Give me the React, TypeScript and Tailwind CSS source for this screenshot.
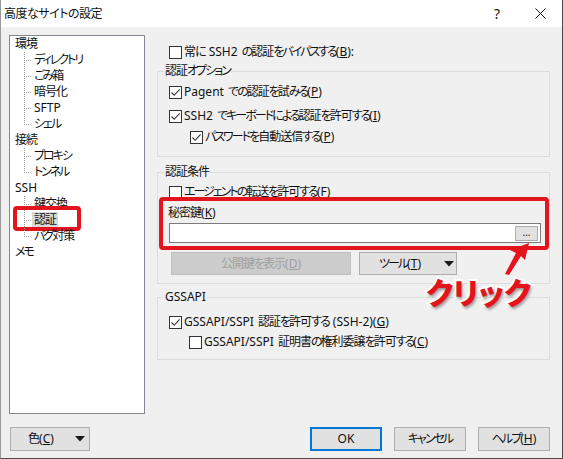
import React from 'react';

type Item = { label: string; child?: boolean; last?: boolean; selected?: boolean };

const tree: Item[] = [
  { label: '環境' },
  { label: 'ディレクトリ', child: true },
  { label: 'ごみ箱', child: true },
  { label: '暗号化', child: true },
  { label: 'SFTP', child: true },
  { label: 'シェル', child: true, last: true },
  { label: '接続' },
  { label: 'プロキシ', child: true },
  { label: 'トンネル', child: true, last: true },
  { label: 'SSH' },
  { label: '鍵交換', child: true },
  { label: '認証', child: true, selected: true },
  { label: 'バグ対策', child: true, last: true },
  { label: 'メモ' },
];

// narrower kana / kanji runs, closer to Meiryo UI widths
const T = ({ s }: { s: string }) => (
  <>
    {s.split(/([\u3040-\u30ff]+|[\u4e00-\u9fff]+)/).map((p, i) =>
      /[\u3040-\u30ff]/.test(p) ? (
        <span key={i} className="tracking-[-2px]">{p}</span>
      ) : /[\u4e00-\u9fff]/.test(p) ? (
        <span key={i} className="tracking-[-1px]">{p}</span>
      ) : (
        p
      )
    )}
  </>
);

// dotted tree connector
const Branch = ({ last }: { last?: boolean }) => (
  <svg width="17" height="16" className="shrink-0" shapeRendering="crispEdges">
    <line x1="9.5" y1="0" x2="9.5" y2={last ? 9 : 16} stroke="#9a9a9a" strokeDasharray="1 1" />
    <line x1="11" y1="8.5" x2="17" y2="8.5" stroke="#9a9a9a" strokeDasharray="1 1" />
  </svg>
);

const Check = ({ checked }: { checked?: boolean }) => (
  <span className="w-[13px] h-[13px] border border-[#333] bg-white flex items-center justify-center shrink-0">
    {checked && (
      <svg width="11" height="11" viewBox="0 0 11 11">
        <path d="M1.5 5.5 L4.2 8.3 L9.6 2.4" fill="none" stroke="#333" strokeWidth="1.1" />
      </svg>
    )}
  </span>
);

const M = ({ k }: { k: string }) => (
  <>
    (<span className="underline underline-offset-[1px]">{k}</span>)
  </>
);

const CheckRow = ({ checked, children, className = '' }: { checked?: boolean; children: React.ReactNode; className?: string }) => (
  <div className={`flex items-center h-[16px] ${className}`}>
    <Check checked={checked} />
    <span className="ml-[2px] whitespace-nowrap">{children}</span>
  </div>
);

const Caret = () => (
  <svg width="10" height="6" viewBox="0 0 10 6" className="shrink-0">
    <path d="M0 0 H10 L5 5.5 Z" fill="#1a1a1a" />
  </svg>
);

const App: React.FC = () => {
  return (
    <div className="relative w-[563px] h-[459px] overflow-hidden bg-[#f0f0f0] border-l border-[#9a9a9a] border-r border-r-[#4a4a4a] border-b border-b-[#4a4a4a] text-[12px] text-[#111] [word-spacing:1px] [font-family:'Noto_Sans','Noto_Sans_CJK_JP',sans-serif] [font-feature-settings:'palt'] flex flex-col">
      {/* title bar */}
      <div className="h-[27px] bg-white flex items-center shrink-0">
        <span className="ml-[3px] text-[12px] tracking-[-0.5px]">高度なサイトの設定</span>
        <span className="ml-auto mr-[35px] text-[14px] leading-none">?</span>
        <svg width="11" height="11" viewBox="0 0 11 11" className="mr-[16px]">
          <path d="M0.5 0.5 L10.5 10.5 M10.5 0.5 L0.5 10.5" stroke="#111" strokeWidth="1" />
        </svg>
      </div>

      {/* body */}
      <div className="flex pt-[8px] pl-[8px]">
        {/* tree */}
        <div className="w-[136px] h-[379px] border border-[#828790] bg-white pl-[5px] shrink-0">
          {tree.map((it) => (
            <div key={it.label} className="relative flex items-center h-[16px] whitespace-nowrap">
              {it.child && <Branch last={it.last} />}
              <span className={`leading-[16px] ${it.child ? 'px-[2px]' : ''} ${it.selected ? 'bg-[#d9d9d9]' : ''}`}>
                <T s={it.label} />
              </span>
              {it.selected && (
                <div className="absolute left-[-2px] top-[-6px] w-[68px] h-[25px] border-[4px] border-[#e4141c] rounded-[4px]" />
              )}
            </div>
          ))}
        </div>

        {/* settings */}
        <div className="ml-[12px] w-[393px] flex flex-col">
          <CheckRow className="mt-[9px] ml-[12px]">
            <T s="常に SSH2 の認証をバイパスする" />
            <M k="B" />:
          </CheckRow>

          <fieldset className="mt-[3px] h-[94px] border border-[#dcdcdc] p-0 m-0 min-w-0">
            <legend className="ml-[6px] px-[1px] leading-[16px]">
              <T s="認証オプション" />
            </legend>
            <div className="pl-[11px] flex flex-col">
              <CheckRow checked className="mt-[5px]">
                <T s="Pagent での認証を試みる" />
                <M k="P" />
              </CheckRow>
              <CheckRow checked className="mt-[8px]">
                <T s="SSH2 でキーボードによる認証を許可する" />
                <M k="I" />
              </CheckRow>
              <CheckRow checked className="mt-[5px] ml-[21px]">
                <T s="パスワードを自動送信する" />
                <M k="P" />
              </CheckRow>
            </div>
          </fieldset>

          <fieldset className="mt-[7px] h-[120px] border border-[#dcdcdc] p-0 m-0 min-w-0">
            <legend className="ml-[6px] px-[1px] leading-[16px]">
              <T s="認証条件" />
            </legend>
            <div className="pl-[11px] flex flex-col">
              <CheckRow className="mt-[4px]">
                <T s="エージェントの転送を許可する" />
                <M k="F" />
              </CheckRow>
              <div className="relative mt-[5px]">
                <div className="h-[16px] leading-[16px] -ml-[1px]">
                  <T s="秘密鍵" />
                  <M k="K" />
                </div>
                <div className="mt-[2px] w-[372px] h-[20px] border border-[#7a7a7a] bg-white flex items-center justify-end pr-[2px]">
                  <div className="w-[23px] h-[15px] bg-[#e1e1e1] border border-[#adadad] flex items-center justify-center text-[10px] leading-none pb-[3px]">
                    ...
                  </div>
                </div>
                <div className="absolute left-[-10px] top-[-8px] w-[390px] h-[53px] border-[4px] border-[#e4141c] rounded-[4px]" />
              </div>
              <div className="flex mt-[9px] ml-[2px] gap-[8px]">
                <div className="w-[180px] h-[23px] bg-[#cccccc] border border-[#bfbfbf] text-[#a0a0a0] flex items-center justify-center">
                  <T s="公開鍵を表示" />
                  <M k="D" />
                </div>
                <div className="w-[98px] h-[23px] bg-[#e1e1e1] border border-[#adadad] flex items-center pl-[19px] pr-[2px]">
                  <span>
                    <T s="ツール" />
                    <M k="T" />
                  </span>
                  <span className="ml-auto">
                    <Caret />
                  </span>
                </div>
              </div>
            </div>
          </fieldset>

          <fieldset className="mt-[5px] h-[71px] border border-[#dcdcdc] p-0 m-0 min-w-0">
            <legend className="ml-[6px] px-[1px] leading-[16px]">GSSAPI</legend>
            <div className="pl-[11px] flex flex-col">
              <CheckRow checked className="mt-[9px]">
                <T s="GSSAPI/SSPI 認証を許可する (SSH-2)" />
                <M k="G" />
              </CheckRow>
              <CheckRow className="mt-[4px] ml-[20px]">
                <T s="GSSAPI/SSPI 証明書の権利委譲を許可する" />
                <M k="C" />
              </CheckRow>
            </div>
          </fieldset>
        </div>
      </div>

      {/* bottom buttons */}
      <div className="flex mt-[13px] pl-[9px] pr-[12px]">
        <div className="w-[80px] h-[24px] bg-[#e1e1e1] border border-[#adadad] flex items-center pl-[17px] pr-[4px]">
          <span>
            <T s="色" />
            <M k="C" />
          </span>
          <span className="ml-auto">
            <Caret />
          </span>
        </div>
        <div className="ml-auto flex gap-[12px]">
          <div className="w-[72px] h-[24px] bg-[#e1e1e1] border-2 border-[#0078d7] flex items-center justify-center">OK</div>
          <div className="w-[72px] h-[24px] bg-[#e1e1e1] border border-[#adadad] flex items-center justify-center">
            <T s="キャンセル" />
          </div>
          <div className="w-[72px] h-[24px] bg-[#e1e1e1] border border-[#adadad] flex items-center justify-center">
            <T s="ヘルプ" />
            <M k="H" />
          </div>
        </div>
      </div>

      {/* annotations */}
      <svg className="absolute left-[495px] top-[236px]" width="40" height="44" viewBox="0 0 40 44">
        <path d="M33 7 L14 14 L20 17 L9 38 L13 39 L25 20 L29 24 Z" fill="#e4141c" />
      </svg>
      <div className="absolute left-[425px] top-[274px] text-[30px] leading-[38px] font-black text-[#e4141c] [-webkit-text-stroke:4px_#fff] [paint-order:stroke_fill] [text-shadow:1px_2px_3px_rgba(0,0,0,0.45)]">
        クリック
      </div>
    </div>
  );
};

export default App;
